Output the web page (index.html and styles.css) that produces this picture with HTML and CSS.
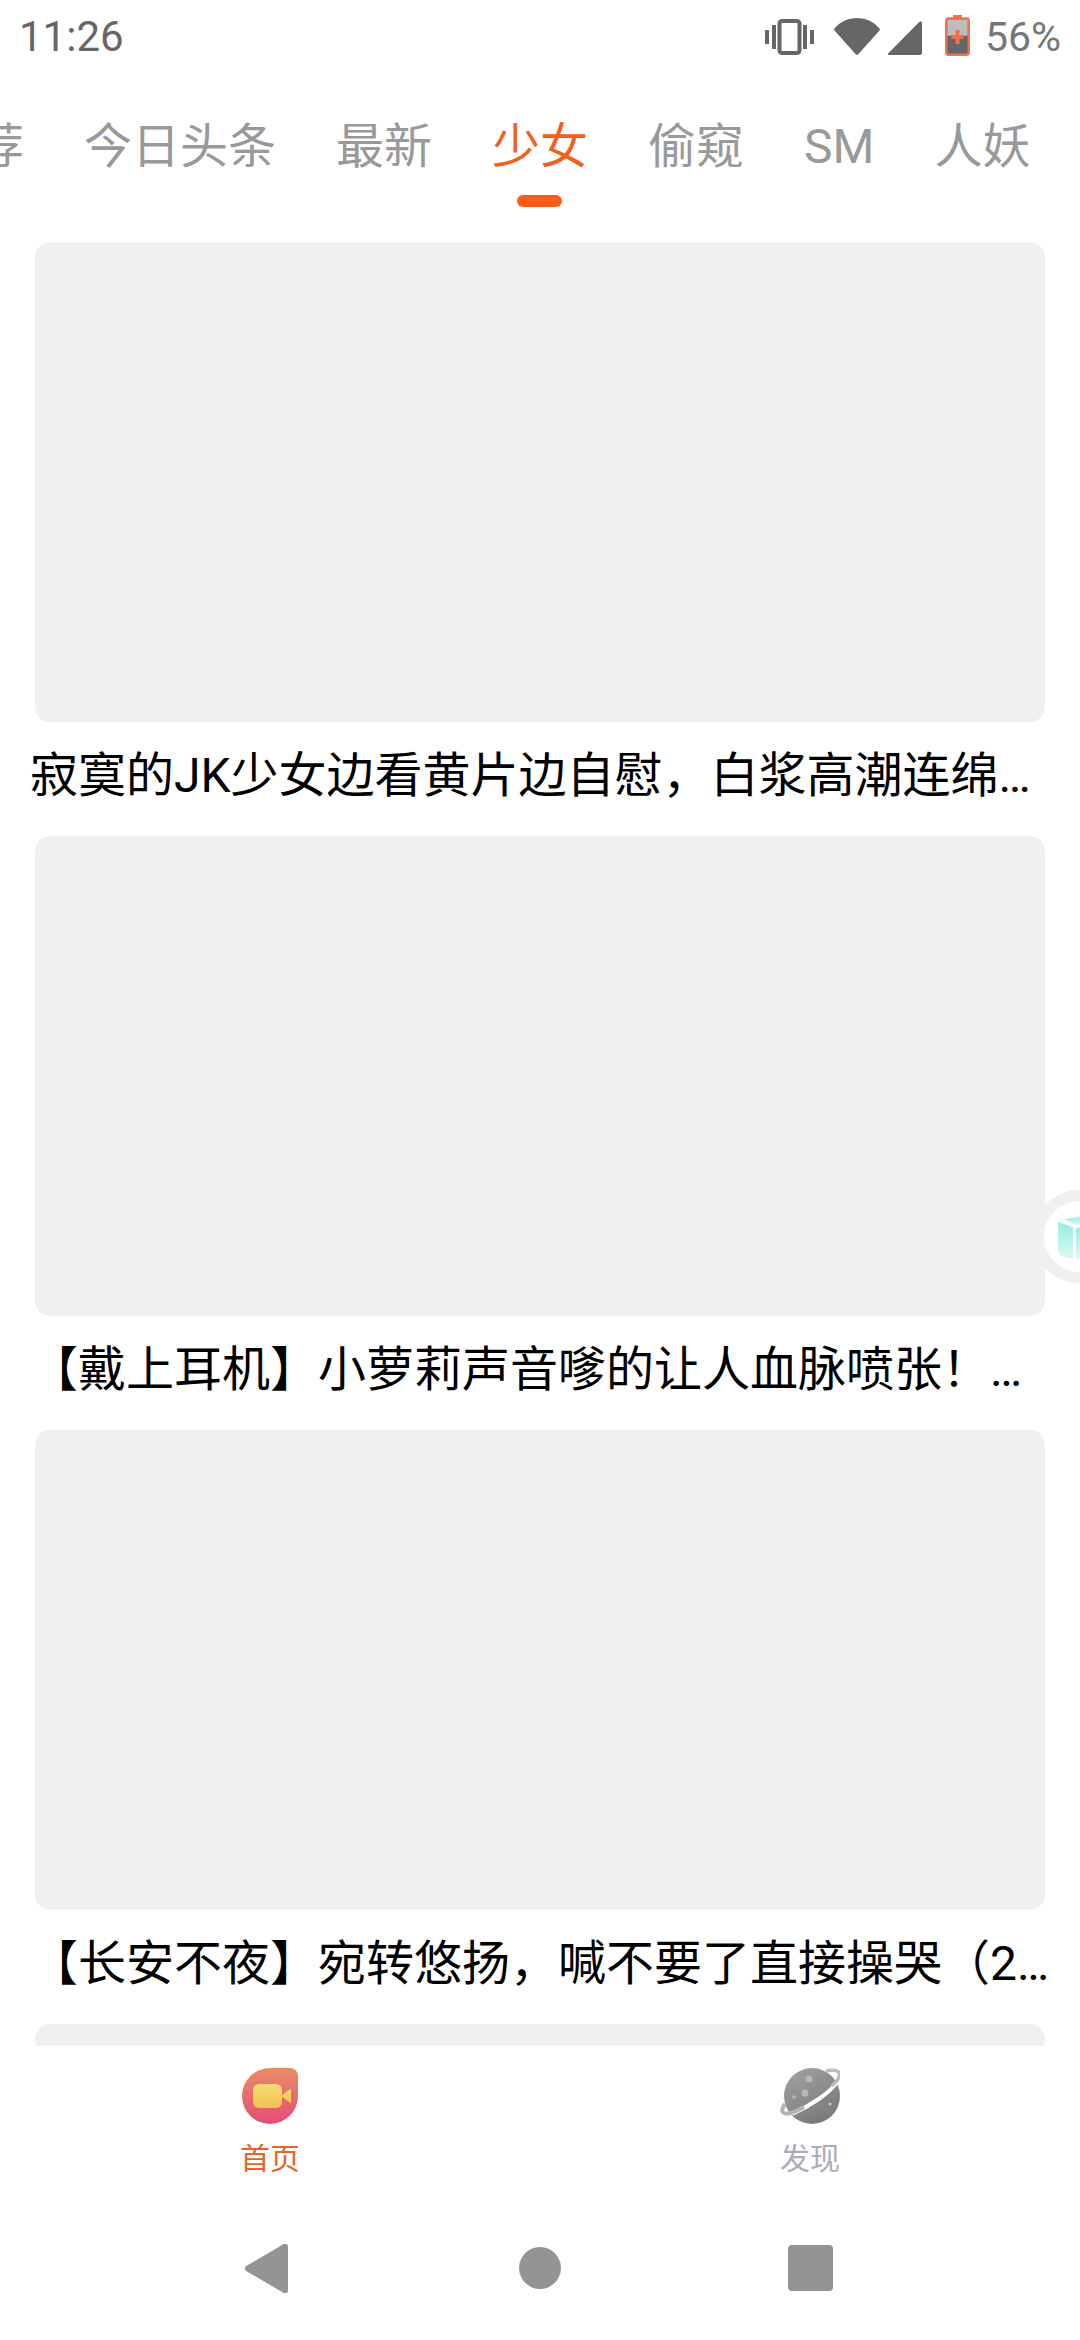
FILE: index.html
```html
<!DOCTYPE html>
<html lang="zh-CN">
<head>
<meta charset="utf-8">
<title>首页</title>
<link rel="stylesheet" href="styles.css">
</head>
<body>
<div class="page">
  <header class="status">
    <span class="time">11:26</span>
    <div class="status-right">
      <svg class="ic-vib" viewBox="0 0 49 36"><rect x="14.5" y="2" width="20" height="32" rx="2.5" fill="none" stroke="#666" stroke-width="4"/><rect x="0" y="11" width="4" height="14" fill="#666"/><rect x="7" y="6" width="4" height="24" fill="#666"/><rect x="38" y="6" width="4" height="24" fill="#666"/><rect x="45" y="11" width="4" height="14" fill="#666"/></svg>
      <svg class="ic-wifi" viewBox="0 0 46 37"><path d="M0.5 10.5C6 4 14 0 23 0s17 4 22.5 10.5a1.5 1.5 0 0 1 0 2L24.5 36a2 2 0 0 1-3 0L0.5 12.500a1.500 1.500 0 0 1 0-2z" fill="#666"/></svg>
      <svg class="ic-sig" viewBox="0 0 34 34"><path d="M1 34a1 1 0 0 1-.7-1.700L31.500.700A1.500 1.500 0 0 1 34 2v30a2 2 0 0 1-2 2z" fill="#666"/></svg>
      <svg class="ic-bat" viewBox="0 0 25 42"><rect x="8" y="1" width="9" height="5" fill="#f0704a"/><rect x="1.200" y="4.500" width="22.600" height="36.300" rx="2.500" fill="#666" stroke="#f0704a" stroke-width="2.400"/><rect x="2.400" y="5.700" width="20.200" height="16" fill="#bdbdbd"/><rect x="10.500" y="16" width="4" height="14" fill="#f0704a"/><rect x="6.500" y="21" width="12" height="4" fill="#f0704a"/></svg>
      <span class="pct">56%</span>
    </div>
  </header>

  <nav class="tabs">
    <a class="tab">推荐</a>
    <a class="tab">今日头条</a>
    <a class="tab">最新</a>
    <a class="tab active">少女</a>
    <a class="tab">偷窥</a>
    <a class="tab">SM</a>
    <a class="tab">人妖</a>
  </nav>

  <main class="feed">
    <article class="item">
      <div class="thumb"></div>
      <h2 class="title">寂寞的JK少女边看黄片边自慰&#xFF0C;白浆高潮连绵&#x2026;</h2>
    </article>
    <article class="item">
      <div class="thumb"></div>
      <h2 class="title">【戴上耳机】小萝莉声音嗲的让人血脉喷张&#xFF01;&#x2026;</h2>
    </article>
    <article class="item">
      <div class="thumb"></div>
      <h2 class="title">【长安不夜】宛转悠扬&#xFF0C;喊不要了直接操哭&#xFF08;2&#x2026;</h2>
    </article>
    <article class="item">
      <div class="thumb"></div>
    </article>
  </main>

  <footer class="tabbar">
    <a class="tb-item on">
      <span class="home-ic">
        <svg class="cam" viewBox="0 0 38 24"><rect x="0" y="0" width="29" height="24" rx="6" fill="url(#camg)"/><path d="M28 12l8.500-6.500a1 1 0 0 1 1.500.800v11.400a1 1 0 0 1-1.500.800z" fill="url(#camg)"/><defs><linearGradient id="camg" x1="0" y1="0" x2="0" y2="1"><stop offset="0" stop-color="#f6dc72"/><stop offset="1" stop-color="#f2c24e"/></linearGradient></defs></svg>
      </span>
      <span class="tb-label">首页</span>
    </a>
    <a class="tb-item">
      <svg class="planet" viewBox="0 0 60 56">
        <defs><linearGradient id="plg" x1="0.200" y1="0" x2="0.800" y2="1"><stop offset="0" stop-color="#a0a0a0"/><stop offset="1" stop-color="#777"/></linearGradient></defs>
        <circle cx="32" cy="28" r="28" fill="url(#plg)"/>
        <circle cx="29" cy="11" r="3.500" fill="#b8b8b8"/>
        <circle cx="25" cy="25" r="3.500" fill="#b8b8b8"/>
        <circle cx="14" cy="29" r="1.800" fill="#b8b8b8"/>
        <circle cx="50" cy="36" r="1.500" fill="#c8c8c8"/>
        <path d="M58 13C50 25 30 38 12 46" fill="none" stroke="#fff" stroke-width="4"/>
        <path d="M46 3C56 1 61 3 59 9C58 12 55 15 52 18" fill="none" stroke="#bcbcbc" stroke-width="3.500"/>
        <path d="M24 39C19 42 15 44 10 45C2 47 0 43 5 36" fill="none" stroke="#b4b4b4" stroke-width="4"/>
      </svg>
      <span class="tb-label">发现</span>
    </a>
  </footer>

  <div class="sysnav">
    <svg class="nav-back" viewBox="0 0 43 49"><path d="M37.500.800a3 3 0 0 1 5.500 1.700v44a3 3 0 0 1-5.500 1.700L1.200 27a3 3 0 0 1 0-5z" fill="#949494"/></svg>
    <span class="nav-home"></span>
    <span class="nav-recent"></span>
  </div>

  <aside class="float-btn">
    <svg class="cube" viewBox="0 0 48 42"><defs><linearGradient id="cug" x1="0" y1="0" x2="0" y2="1"><stop offset="0" stop-color="#93eee0"/><stop offset="1" stop-color="#dff9f5"/></linearGradient></defs><path d="M0 5L15 10V42L6 40Q0 38 0 32z" fill="url(#cug)"/><path d="M6 2L22 0L48 0V6L17 8z" fill="url(#cug)"/><path d="M18 11L48 9V42H18z" fill="url(#cug)"/></svg>
  </aside>
</div>
</body>
</html>
```
FILE: styles.css
```css
* { box-sizing: border-box; }
html, body { margin: 0; padding: 0; background: #fff; }
body { font-family: Roboto, "Noto Sans CJK SC", sans-serif; }

.page {
  position: relative;
  width: 1080px;
  height: 2340px;
  overflow: hidden;
  display: flex;
  flex-direction: column;
  background: #fff;
}

.status {
  height: 74px;
  flex: none;
  display: flex;
  align-items: center;
  justify-content: space-between;
  padding: 0 19px 0 19px;
}
.time { font-size: 42px; font-weight: 400; color: #666; line-height: 74px; }
.status-right { display: flex; align-items: center; }
.ic-vib { width: 49px; height: 36px; margin-right: 20px; }
.ic-wifi { width: 46px; height: 37px; margin-right: 8px; margin-top: -1px; }
.ic-sig { width: 34px; height: 34px; margin-right: 23px; margin-top: 2px; }
.ic-bat { width: 25px; height: 42px; margin-right: 15px; margin-top: -4px; }
.pct { font-size: 41px; color: #777; line-height: 74px; }

.tabs {
  height: 168px;
  flex: none;
  display: flex;
  gap: 60px;
  margin-left: -72px;
  padding-top: 42px;
}
.tab {
  position: relative;
  flex: none;
  font-size: 48px;
  line-height: 62px;
  height: 62px;
  color: #999;
  white-space: nowrap;
}
.tab.active { color: #f2601f; }
.tab.active::after {
  content: "";
  position: absolute;
  left: 25px;
  top: 79px;
  width: 45px;
  height: 12px;
  border-radius: 6px;
  background: #fa5a1a;
}

.feed { flex: 1; min-height: 0; overflow: hidden; }
.item { height: 594px; }
.thumb {
  height: 480px;
  margin: 0 35px;
  border-radius: 15px;
  background: #f0f0f0;
}
.title {
  margin: 0 0 0 30px;
  height: 114px;
  font-size: 48px;
  font-weight: 400;
  line-height: 108px;
  color: #000;
  white-space: nowrap;
}

.tabbar {
  height: 150px;
  flex: none;
  display: grid;
  grid-template-columns: 1fr 1fr;
  background: #fff;
}
.tb-item {
  display: flex;
  flex-direction: column;
  align-items: center;
  padding-top: 22px;
  color: #a9adb8;
}
.tb-item.on { color: #e8622a; }
.home-ic {
  width: 56px;
  height: 56px;
  display: flex;
  align-items: center;
  padding-left: 11px;
  border-radius: 50% 8px 50% 50%;
  background: linear-gradient(#e98d68, #e44c76);
}
.cam { width: 38px; height: 24px; }
.planet { width: 60px; height: 56px; }
.tb-label { font-size: 30px; line-height: 36px; margin-top: 17px; }

.sysnav {
  height: 144px;
  flex: none;
  display: flex;
  align-items: center;
  padding-left: 245px;
}
.nav-back { width: 43px; height: 49px; margin-right: 231px; }
.nav-home { width: 42px; height: 42px; border-radius: 50%; background: #949494; margin-right: 227px; }
.nav-recent { width: 45px; height: 46px; border-radius: 4px; background: #949494; }

.float-btn {
  position: absolute;
  left: 1033px;
  top: 1190px;
  width: 93px;
  height: 93px;
  border: 11px solid #f0f0f0;
  border-radius: 50%;
  background: #fff;
}
.cube { position: absolute; left: 14px; top: 16px; width: 48px; height: 42px; }
```
